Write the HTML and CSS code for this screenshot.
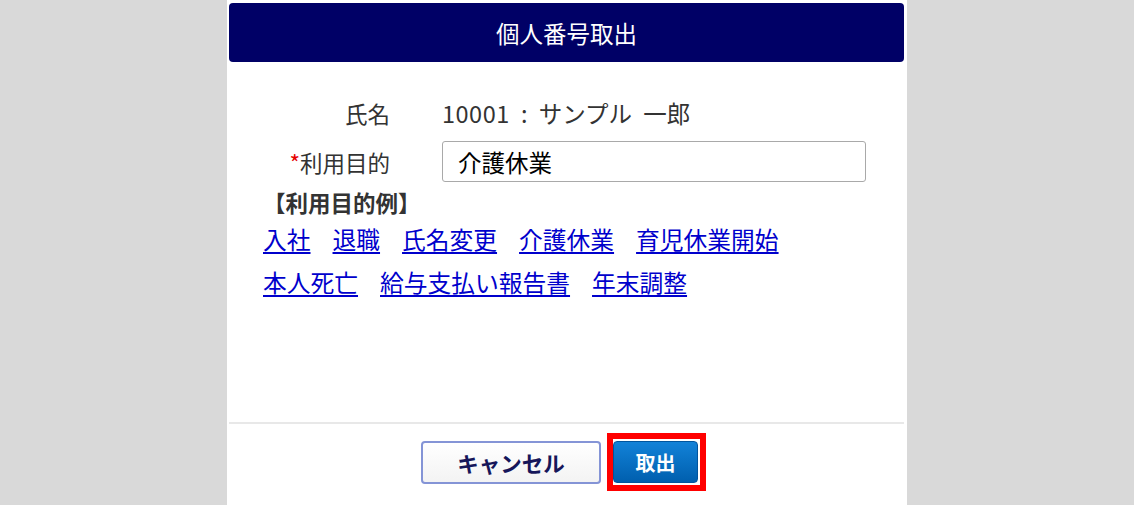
FILE: index.html
```html
<!DOCTYPE html>
<html lang="ja">
<head>
<meta charset="utf-8">
<title>個人番号取出</title>
<link rel="stylesheet" href="styles.css">
</head>
<body>
<div class="dialog">
  <div class="dialog-header">個人番号取出</div>
  <div class="dialog-body">
    <div class="form">
      <div class="label">氏名</div>
      <div class="value name-value"><span class="digits">10001</span> : サンプル 一郎</div>
      <div class="label"><span class="req">*</span>利用目的</div>
      <div class="value"><input class="text-input" type="text" value="介護休業"></div>
    </div>
    <div class="examples">
      <div class="examples-title">【利用目的例】</div>
      <div class="link-row">
        <a href="#">入社</a><a href="#">退職</a><a href="#">氏名変更</a><a href="#">介護休業</a><a href="#">育児休業開始</a>
      </div>
      <div class="link-row">
        <a href="#">本人死亡</a><a href="#">給与支払い報告書</a><a href="#">年末調整</a>
      </div>
    </div>
  </div>
  <div class="dialog-divider"></div>
  <div class="dialog-footer">
    <button class="btn btn-cancel" type="button">キャンセル</button>
    <span class="highlight"><button class="btn btn-primary" type="button">取出</button></span>
  </div>
</div>
</body>
</html>
```

FILE: styles.css
```css
html, body {
  margin: 0;
  padding: 0;
  height: 100%;
}
body {
  background: #d9d9d9;
  font-family: "Noto Sans CJK JP", "Noto Sans", sans-serif;
  color: #333;
  overflow: hidden;
}
.dialog {
  width: 680px;
  height: 505px;
  margin: 0 auto;
  background: #fff;
  padding-top: 3px;
  box-sizing: border-box;
}
.dialog-header {
  margin: 0 3px 0 2px;
  height: 59px;
  background: #000066;
  border-radius: 4px;
  color: #fff;
  font-size: 23.5px;
  display: flex;
  align-items: center;
  justify-content: center;
}
.dialog-body {
  height: 360px;
  box-sizing: border-box;
  padding: 35px 0 0 36px;
}
.form {
  display: grid;
  grid-template-columns: 127px 424px;
  column-gap: 52px;
  row-gap: 12px;
  align-items: center;
}
.label {
  text-align: right;
  font-size: 22.5px;
  line-height: 32px;
  color: #333;
}
.req {
  color: #e60000;
}
.value {
  font-size: 22.5px;
  line-height: 32px;
  color: #333;
}
.name-value {
  font-size: 23.5px;
  word-spacing: 6px;
}
.digits {
  letter-spacing: 0.5px;
}
.text-input {
  display: block;
  width: 424px;
  height: 41px;
  box-sizing: border-box;
  border: 1px solid #a9a9a9;
  border-radius: 3px;
  padding: 0 15px;
  font-family: "Noto Sans CJK JP", sans-serif;
  font-size: 23.5px;
  color: #000;
  background: #fff;
  outline: none;
}
.examples {
  margin-top: 5px;
}
.examples-title {
  font-weight: bold;
  font-size: 22.5px;
  line-height: 30px;
  color: #333;
}
.link-row {
  display: flex;
  gap: 22px;
  line-height: 43px;
  font-size: 23.75px;
}
.link-row a {
  color: #0000cc;
  text-decoration: underline;
  text-underline-offset: 3px;
}
.dialog-divider {
  height: 2px;
  margin: 0 3px 0 2px;
  background: #e8e8e8;
}
.dialog-footer {
  display: flex;
  justify-content: center;
  align-items: center;
  gap: 6px;
  padding: 9px 7px 0 0;
}
.btn {
  font-family: "Noto Sans CJK JP", sans-serif;
  font-weight: bold;
  cursor: pointer;
  border-radius: 4px;
  box-sizing: border-box;
}
.btn-cancel {
  width: 180px;
  height: 43px;
  border: 2px solid #8494d6;
  background: linear-gradient(#ffffff, #f3f3f3);
  color: #16165a;
  font-size: 21.5px;
}
.highlight {
  display: inline-flex;
  border: 6px solid #ff0000;
  padding: 2px 2px 2px 0;
}
.btn-primary {
  width: 85px;
  height: 42px;
  border: 1px solid #00559e;
  background: linear-gradient(#1282d8, #005fae);
  color: #fff;
  font-size: 20px;
}
```
